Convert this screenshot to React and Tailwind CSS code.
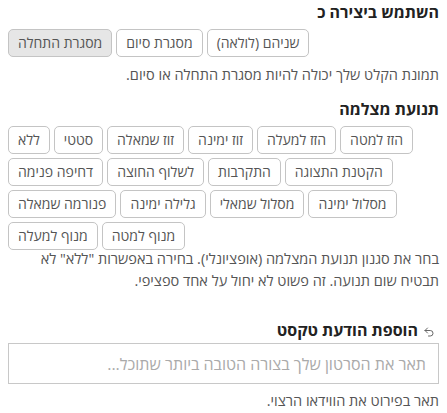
import React, { useState } from "react";

const frameOptions = ["מסגרת התחלה", "מסגרת סיום", "שניהם (לולאה)"];

const motionOptions = [
  "ללא",
  "סטטי",
  "זוז שמאלה",
  "זוז ימינה",
  "הזז למעלה",
  "הזז למטה",
  "דחיפה פנימה",
  "לשלוף החוצה",
  "התקרבות",
  "הקטנת התצוגה",
  "פנורמה שמאלה",
  "גלילה ימינה",
  "מסלול שמאלי",
  "מסלול ימינה",
  "מנוף למעלה",
  "מנוף למטה",
];

const OptionButton = ({ label, active, onClick }) => (
  <button
    onClick={onClick}
    className={`h-7 px-[9px] rounded-[5px] border border-[#c4c4c4] text-[14px] leading-none text-[#555] ${
      active ? "bg-[#e6e6e6]" : "bg-white"
    }`}
  >
    {label}
  </button>
);

const App = () => {
  const [frame, setFrame] = useState("מסגרת התחלה");
  const [motion, setMotion] = useState(null);
  const [prompt, setPrompt] = useState("");

  return (
    <div
      dir="rtl"
      className="px-2 pt-[2px] bg-white text-[#333] font-['Open_Sans','DejaVu_Sans',sans-serif]"
    >
      <h3 className="text-[16px] leading-5 font-bold text-[#222]">השתמש ביצירה כ</h3>
      <div dir="ltr" className="flex flex-wrap gap-1 mt-[7px]">
        {frameOptions.map((opt) => (
          <OptionButton
            key={opt}
            label={opt}
            active={frame === opt}
            onClick={() => setFrame(opt)}
          />
        ))}
      </div>
      <p className="text-[14.5px] leading-5 text-[#555] mt-2">
        תמונת הקלט שלך יכולה להיות מסגרת התחלה או סיום.
      </p>

      <h3 className="text-[16px] leading-5 font-bold text-[#222] mt-[14px]">תנועת מצלמה</h3>
      <div dir="ltr" className="flex flex-wrap gap-1 mt-[7px]">
        {motionOptions.map((opt) => (
          <OptionButton
            key={opt}
            label={opt}
            active={motion === opt}
            onClick={() => setMotion(opt)}
          />
        ))}
      </div>
      <p className="text-[14.5px] leading-[22px] text-[#555] -mt-[2px]">
        בחר את סגנון תנועת המצלמה (אופציונלי). בחירה באפשרות "ללא" לא תבטיח שום תנועה. זה
        פשוט לא יחול על אחד ספציפי.
      </p>

      <div className="flex items-center gap-[5px] mt-[28px] pr-[4px]">
        <svg
          width="12"
          height="12"
          viewBox="0 0 24 24"
          fill="none"
          stroke="#666"
          strokeWidth="2"
          strokeLinecap="round"
          strokeLinejoin="round"
          className="mt-1"
        >
          <path d="M9 14 4 9l5-5" />
          <path d="M4 9h10.5a5.5 5.5 0 0 1 5.5 5.5a5.5 5.5 0 0 1-5.5 5.5H11" />
        </svg>
        <h3 className="text-[16px] leading-5 font-bold text-[#222]">הוספת הודעת טקסט</h3>
      </div>
      <input
        value={prompt}
        onChange={(e) => setPrompt(e.target.value)}
        placeholder="תאר את הסרטון שלך בצורה הטובה ביותר שתוכל..."
        className="block w-full h-[41px] mt-[3px] px-3 border border-[#c8c8c8] text-[16px] text-[#333] placeholder:text-[#aaa] outline-none"
      />
      <p className="text-[14.5px] leading-5 text-[#555] mt-[7px]">תאר בפירוט את הווידאו הרצוי.</p>
    </div>
  );
};

export default App;
